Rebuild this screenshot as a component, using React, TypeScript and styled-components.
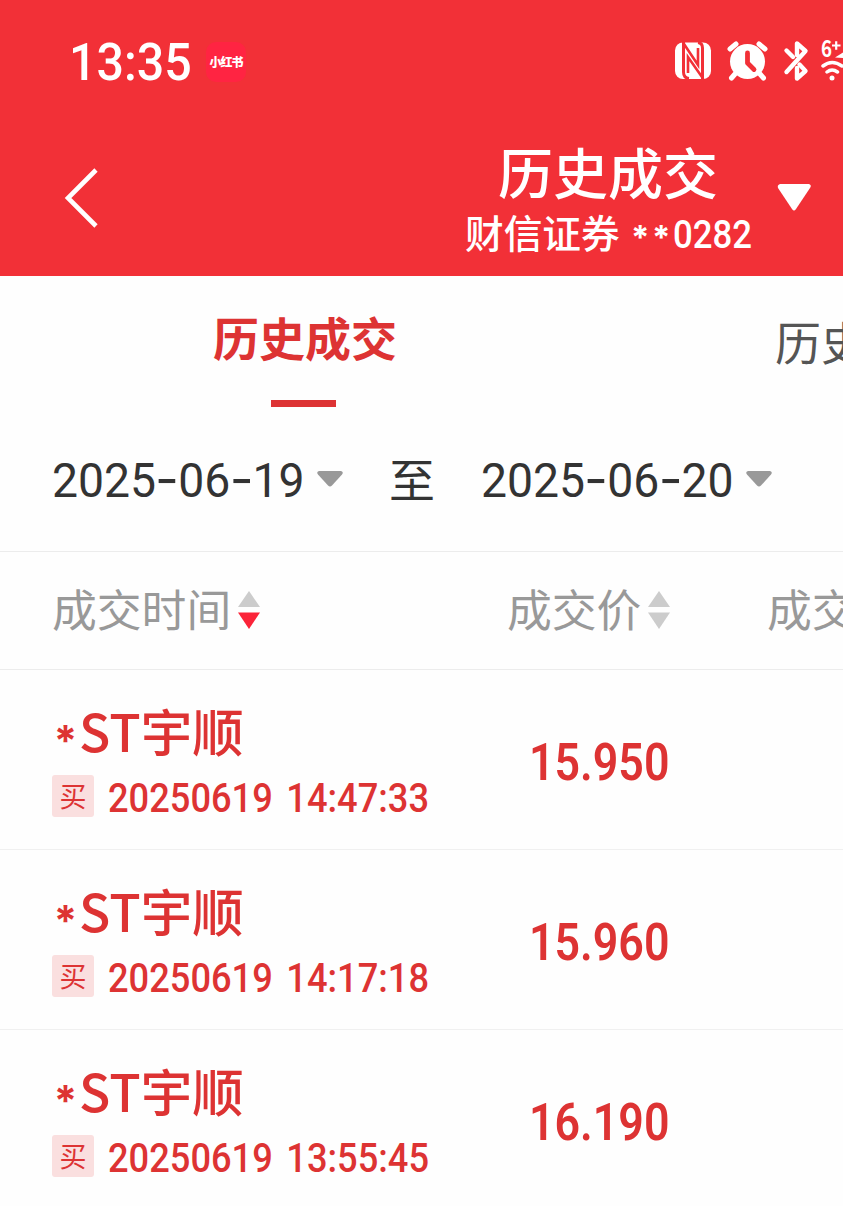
import React from "react";
import styled, { createGlobalStyle } from "styled-components";

const RED = "#dd3333";

const GlobalStyle = createGlobalStyle`
  * { box-sizing: border-box; }
  body {
    margin: 0;
    background: #fefefe;
    font-family: "Noto Sans CJK SC", "Noto Sans", sans-serif;
    overflow: hidden;
  }
`;

const Screen = styled.div`
  width: 843px;
  height: 1206px;
  overflow: hidden;
  display: flex;
  flex-direction: column;
`;

const Header = styled.header`
  height: 276px;
  flex: none;
  background: #f23037;
  color: #fff;
`;

const StatusBar = styled.div`
  height: 124px;
  display: flex;
  align-items: center;
  padding-left: 69px;
`;

const Digits = styled.span<{ $size: number; $squeeze: number; $width: number; $weight: number; $drop?: number }>`
  display: inline-block;
  width: ${(p) => p.$width}px;
  padding-top: ${(p) => (p.$drop ?? 0) * 2}px;
  flex: none;
  font-family: Roboto, "Noto Sans CJK SC", sans-serif;
  font-size: ${(p) => p.$size}px;
  line-height: 60px;
  font-weight: ${(p) => p.$weight};
  white-space: nowrap;
  word-spacing: 5px;
  transform: scaleX(${(p) => p.$squeeze});
  transform-origin: left center;
`;

const AppBadge = styled.span`
  width: 40px;
  height: 40px;
  border-radius: 10px;
  background: #ff2442;
  font-size: 12px;
  line-height: 39px;
  font-weight: 900;
  text-align: center;
  letter-spacing: -1px;
  white-space: nowrap;
`;

const StatusIcons = styled.svg`
  margin-left: auto;
  flex: none;
`;

const NavBar = styled.div`
  height: 152px;
  display: flex;
  padding-left: 64px;
`;

const BackIcon = styled.svg`
  margin-top: 43px;
  flex: none;
`;

const TitleBlock = styled.div`
  width: 300px;
  margin-left: 359px;
  padding-top: 16px;
  display: flex;
  flex-direction: column;
  align-items: center;
  flex: none;
`;

const Title = styled.h1`
  margin: 0;
  font-size: 55px;
  line-height: 60px;
  font-weight: 500;
  white-space: nowrap;
`;

const Account = styled.div`
  width: 286px;
  height: 48px;
  display: flex;
  align-items: center;
  margin-top: 7px;
  font-size: 38.7px;
  line-height: 48px;
  font-weight: 500;
  white-space: nowrap;
`;

const Stars = styled.span`
  display: flex;
  margin: 11px 1px 0 10px;
`;

const Star = styled.span<{ $size: number; $width: number; $drop: number }>`
  display: inline-block;
  width: ${(p) => p.$width}px;
  font-family: Inter, sans-serif;
  font-size: ${(p) => p.$size}px;
  line-height: 0;
  text-align: center;
  vertical-align: ${(p) => -p.$drop}px;
  font-weight: 700;
`;

const TitleCaret = styled.svg`
  margin: 59px 0 0 19px;
  flex: none;
`;

const Tabs = styled.nav`
  height: 136px;
  flex: none;
  display: flex;
  white-space: nowrap;
  overflow: hidden;
`;

const Tab = styled.div<{ $active?: boolean }>`
  width: ${(p) => (p.$active ? "610px" : "233px")};
  padding-top: ${(p) => (p.$active ? 29 : 33)}px;
  padding-left: ${(p) => (p.$active ? 0 : 165)}px;
  flex: none;
  display: flex;
  flex-direction: column;
  align-items: ${(p) => (p.$active ? "center" : "flex-start")};
  font-size: 46px;
  line-height: 62px;
  font-weight: ${(p) => (p.$active ? 700 : 400)};
  color: ${(p) => (p.$active ? RED : "#555")};
`;

const TabLine = styled.i`
  width: 65px;
  height: 7px;
  margin: 33px 3px 0 0;
  background: #dd3334;
`;

const DateBar = styled.div`
  height: 140px;
  flex: none;
  display: flex;
  align-items: center;
  padding: 0 0 6px 52px;
  border-bottom: 1px solid #ececec;
  color: #333;
  white-space: nowrap;
`;

const Dash = styled.span`
  display: inline-block;
  width: 23.5px;
  text-align: center;
  font-family: Inter, sans-serif;
  font-size: 50px;
  line-height: 0;
  transform: scaleX(1.1);
`;

const DateCaret = styled.svg`
  flex: none;
`;

const Between = styled.span`
  width: 46px;
  margin: 0 46px 4px;
  font-size: 46px;
  line-height: 60px;
  flex: none;
`;

const ColumnHead = styled.div`
  height: 118px;
  flex: none;
  display: grid;
  grid-template-columns: 455px 260px 80px;
  align-items: center;
  padding: 0 0 6px 52px;
  border-bottom: 1px solid #ececec;
  color: #999;
  font-size: 44.8px;
  line-height: 60px;
  white-space: nowrap;
`;

const Column = styled.div`
  display: flex;
  align-items: center;
`;

const SortIcon = styled.svg`
  margin: 4px 0 0 7px;
  flex: none;
`;

const Row = styled.div`
  height: 180px;
  flex: none;
  display: grid;
  grid-template-columns: 477px 200px;
  padding-left: 52px;
  border-bottom: 1px solid #f0f0f0;
  color: ${RED};
  white-space: nowrap;
`;

const Stock = styled.div`
  padding-top: 28px;
  font-size: 51.5px;
  line-height: 64px;
  font-weight: 500;
`;

const Meta = styled.div`
  height: 42px;
  display: flex;
  align-items: center;
  gap: 14px;
  margin-top: 13px;
`;

const BuyTag = styled.span`
  width: 42px;
  height: 42px;
  border-radius: 3px;
  background: #fadfdf;
  font-size: 27px;
  line-height: 41px;
  font-weight: 400;
  text-align: center;
`;

const PriceCell = styled.div`
  padding-top: 63px;
`;

const trades = [
  { stamp: "20250619 14:47:33", price: "15.950" },
  { stamp: "20250619 14:17:18", price: "15.960" },
  { stamp: "20250619 13:55:45", price: "16.190" },
];

function Sort({ active }: { active?: boolean }) {
  return (
    <SortIcon width="22" height="38" viewBox="0 0 22 38">
      <path d="M11 0L22 16H0z" fill="#ccc" />
      <path d="M0 21.500H22L11 38z" fill={active ? "#fb2439" : "#ccc"} />
    </SortIcon>
  );
}

function DateField({ value }: { value: string }) {
  const parts = value.split("-");
  return (
    <>
      <Digits $size={49} $squeeze={0.945} $width={265} $weight={400} $drop={2}>
        {parts.map((part, i) => (
          <React.Fragment key={i}>
            {i > 0 && <Dash>-</Dash>}
            {part}
          </React.Fragment>
        ))}
      </Digits>
      <DateCaret width="26" height="16" viewBox="0 0 26 16">
        <path d="M2 0H24Q27 1 25 3.500L15 14.500Q13 16.500 11 14.500L1 3.500Q-1 1 2 0z" fill="#999" />
      </DateCaret>
    </>
  );
}

export default function App() {
  return (
    <Screen>
      <GlobalStyle />
      <Header>
        <StatusBar>
          <Digits $size={52} $squeeze={0.93} $width={137} $weight={500} $drop={1}>13:35</Digits>
          <AppBadge>小红书</AppBadge>
          <StatusIcons width="169" height="44" viewBox="0 0 169 44">
            <rect x="1" y="2.500" width="36" height="36.500" rx="8" fill="#fff" />
            <g fill="none" stroke="#f23037" strokeWidth="3">
              <path d="M9.500 2V32Q9.500 38 15 38.500" />
              <path d="M28.500 39V8Q28.500 3 24 2.500" />
              <path d="M10 4L24 25V8" strokeWidth="2.600" />
              <path d="M28 37L14 17V33" strokeWidth="2.600" />
            </g>
            <g stroke="#fff" strokeWidth="5" strokeLinecap="round">
              <path d="M56 9L62 4M85 4L91 9M61 34L57.500 38M86 34L89.500 38" />
            </g>
            <circle cx="73.500" cy="21.500" r="17.500" fill="#fff" />
            <path d="M73.500 13V23L80 29.500" fill="none" stroke="#f23037" strokeWidth="4.800" strokeLinecap="round" strokeLinejoin="round" />
            <path d="M112.500 10.500L119 17M112.500 32L131.500 11L123 3.500V15M123 28V38.500L131.500 31L125.500 24.500" fill="none" stroke="#fff" strokeWidth="4.400" strokeLinecap="round" strokeLinejoin="round" />
            <text x="147" y="17" fill="#fff" fontFamily="Noto Sans CJK SC, sans-serif" fontSize="23" fontWeight="700" textLength="11" lengthAdjust="spacingAndGlyphs">6</text>
            <path d="M158 5.500H166.500M162.200 1.200V9.800" stroke="#fff" strokeWidth="2.200" />
            <path d="M161 17.500L169 12.500V18z" fill="#fff" />
            <g fill="none" stroke="#fff" strokeWidth="3.500" strokeLinecap="round">
              <path d="M149 26Q158 19 168 26M153 32Q158 28 163.500 32" />
            </g>
            <circle cx="158" cy="38" r="2.500" fill="#fff" />
          </StatusIcons>
        </StatusBar>
        <NavBar>
          <BackIcon width="35" height="62" viewBox="0 0 35 62">
            <path d="M32 3L4 31L32 59" fill="none" stroke="#fff" strokeWidth="4.600" />
          </BackIcon>
          <TitleBlock>
            <Title>历史成交</Title>
            <Account>
              财信证券
              <Stars>
                <Star $size={33} $width={21} $drop={0}>*</Star>
                <Star $size={33} $width={21} $drop={0}>*</Star>
              </Stars>
              <Digits $size={39.5} $squeeze={0.88} $width={80} $weight={500} $drop={4}>0282</Digits>
            </Account>
          </TitleBlock>
          <TitleCaret width="35" height="30" viewBox="0 0 35 30">
            <path d="M3 1H32Q35 2 33 5L19 26Q17 29 15 26L1 5Q0 2 3 1z" fill="#fff" />
          </TitleCaret>
        </NavBar>
      </Header>
      <Tabs>
        <Tab $active>
          历史成交
          <TabLine />
        </Tab>
        <Tab>历史</Tab>
      </Tabs>
      <DateBar>
        <DateField value="2025-06-19" />
        <Between>至</Between>
        <DateField value="2025-06-20" />
      </DateBar>
      <ColumnHead>
        <Column>成交时间<Sort active /></Column>
        <Column>成交价<Sort /></Column>
        <Column>成交</Column>
      </ColumnHead>
      {trades.map((trade) => (
        <Row key={trade.stamp}>
          <div>
            <Stock>
              <Star $size={42} $width={27} $drop={4}>*</Star>
              ST宇顺
            </Stock>
            <Meta>
              <BuyTag>买</BuyTag>
              <Digits $size={40.5} $squeeze={0.895} $width={330} $weight={500} $drop={2}>{trade.stamp}</Digits>
            </Meta>
          </div>
          <PriceCell>
            <Digits $size={52} $squeeze={0.86} $width={150} $weight={600}>{trade.price}</Digits>
          </PriceCell>
        </Row>
      ))}
    </Screen>
  );
}
